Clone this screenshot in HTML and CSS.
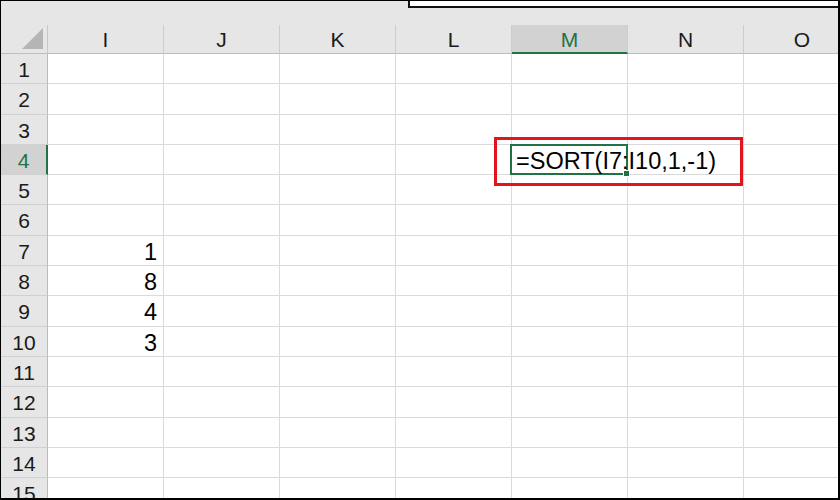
FILE: index.html
```html
<!DOCTYPE html>
<html>
<head>
<meta charset="utf-8">
<link rel="stylesheet" href="styles.css">
</head>
<body>
<div class="frame">
  <div class="topstrip">
    <div class="fbar"></div>
  </div>
  <div class="sheet">
    <div class="corner"><div class="tri"></div></div>
    <div class="ch">I</div><div class="ch">J</div><div class="ch">K</div><div class="ch">L</div><div class="ch sel">M</div><div class="ch">N</div><div class="ch last">O</div>

    <div class="rh">1</div><div class="c"></div><div class="c"></div><div class="c"></div><div class="c"></div><div class="c"></div><div class="c"></div><div class="c"></div>
    <div class="rh">2</div><div class="c"></div><div class="c"></div><div class="c"></div><div class="c"></div><div class="c"></div><div class="c"></div><div class="c"></div>
    <div class="rh">3</div><div class="c"></div><div class="c"></div><div class="c"></div><div class="c"></div><div class="c"></div><div class="c"></div><div class="c"></div>
    <div class="rh sel">4</div><div class="c"></div><div class="c"></div><div class="c"></div><div class="c"></div>
    <div class="c active"><span class="ftext">=SORT(I7:I10,1,-1)</span><div class="activebox"><div class="handle"></div></div><div class="redbox"></div></div>
    <div class="c"></div><div class="c"></div>
    <div class="rh">5</div><div class="c"></div><div class="c"></div><div class="c"></div><div class="c"></div><div class="c"></div><div class="c"></div><div class="c"></div>
    <div class="rh">6</div><div class="c"></div><div class="c"></div><div class="c"></div><div class="c"></div><div class="c"></div><div class="c"></div><div class="c"></div>
    <div class="rh">7</div><div class="c num">1</div><div class="c"></div><div class="c"></div><div class="c"></div><div class="c"></div><div class="c"></div><div class="c"></div>
    <div class="rh">8</div><div class="c num">8</div><div class="c"></div><div class="c"></div><div class="c"></div><div class="c"></div><div class="c"></div><div class="c"></div>
    <div class="rh">9</div><div class="c num">4</div><div class="c"></div><div class="c"></div><div class="c"></div><div class="c"></div><div class="c"></div><div class="c"></div>
    <div class="rh">10</div><div class="c num">3</div><div class="c"></div><div class="c"></div><div class="c"></div><div class="c"></div><div class="c"></div><div class="c"></div>
    <div class="rh">11</div><div class="c"></div><div class="c"></div><div class="c"></div><div class="c"></div><div class="c"></div><div class="c"></div><div class="c"></div>
    <div class="rh">12</div><div class="c"></div><div class="c"></div><div class="c"></div><div class="c"></div><div class="c"></div><div class="c"></div><div class="c"></div>
    <div class="rh">13</div><div class="c"></div><div class="c"></div><div class="c"></div><div class="c"></div><div class="c"></div><div class="c"></div><div class="c"></div>
    <div class="rh">14</div><div class="c"></div><div class="c"></div><div class="c"></div><div class="c"></div><div class="c"></div><div class="c"></div><div class="c"></div>
    <div class="rh">15</div><div class="c"></div><div class="c"></div><div class="c"></div><div class="c"></div><div class="c"></div><div class="c"></div><div class="c"></div>
  </div>
</div>
</body>
</html>
```

FILE: styles.css
```css
html, body {
  margin: 0;
  padding: 0;
  background: #ffffff;
}
body {
  font-family: "Liberation Sans", Arial, sans-serif;
}
.frame {
  width: 840px;
  height: 500px;
  box-sizing: border-box;
  border: 1px solid #000;
  border-right-width: 2px;
  border-bottom-width: 2px;
  overflow: hidden;
  display: flex;
  flex-direction: column;
  background: #fff;
}
.topstrip {
  height: 24px;
  flex: none;
  background: #e6e6e6;
  display: flex;
}
.fbar {
  margin-left: 407px;
  flex: 1;
  height: 7px;
  box-sizing: border-box;
  background: #fff;
  border-left: 2px solid #111;
  border-bottom: 2px solid #111;
}
.sheet {
  display: grid;
  grid-template-columns: 47px repeat(7, 116px);
  grid-template-rows: 29px;
  grid-auto-rows: 30.3px;
}
.corner {
  background: #e6e6e6;
  border-right: 1px solid #c8c8c8;
  border-bottom: 1px solid #bdbdbd;
  position: relative;
}
.tri {
  position: absolute;
  right: 4px;
  bottom: 4px;
  width: 0;
  height: 0;
  border-left: 21px solid transparent;
  border-bottom: 21px solid #b5b5b5;
}
.ch {
  background: #e6e6e6;
  border-bottom: 1px solid #bdbdbd;
  border-right: 1px solid #cdcdcd;
  box-sizing: border-box;
  text-align: center;
  font-size: 21px;
  line-height: 28px;
  padding-top: 1px;
  color: #1a1a1a;
}
.ch.last {
  border-right: none;
}
.ch.sel {
  background: #d2d2d2;
  color: #217346;
  border-bottom: 2px solid #217346;
}
.rh {
  background: #e6e6e6;
  border-right: 1px solid #bcbcbc;
  border-bottom: 1px solid #d0d0d0;
  box-sizing: border-box;
  text-align: center;
  font-size: 21px;
  line-height: 30px;
  padding-top: 1px;
  color: #1a1a1a;
}
.rh.sel {
  background: #d2d2d2;
  color: #217346;
  border-right: 2px solid #217346;
}
.c {
  border-right: 1px solid #dadada;
  border-bottom: 1px solid #dadada;
  box-sizing: border-box;
  font-size: 23.5px;
  line-height: 30px;
  padding-top: 1px;
  color: #000;
  min-width: 0;
}
.c.num {
  text-align: right;
  padding-right: 6px;
}
.c.active {
  position: relative;
  border-right-color: transparent;
  z-index: 2;
}
.ftext {
  position: relative;
  z-index: 3;
  white-space: nowrap;
  padding-left: 4px;
}
.activebox {
  position: absolute;
  left: -2px;
  top: -1px;
  right: -1px;
  bottom: -1px;
  border: 2px solid #217346;
  pointer-events: none;
}
.handle {
  position: absolute;
  right: -4px;
  bottom: -4px;
  width: 5px;
  height: 5px;
  background: #217346;
  border: 1px solid #fff;
}
.redbox {
  position: absolute;
  left: -18px;
  top: -8px;
  width: 249px;
  height: 49px;
  box-sizing: border-box;
  border: 3px solid #e3141c;
  pointer-events: none;
}
```
